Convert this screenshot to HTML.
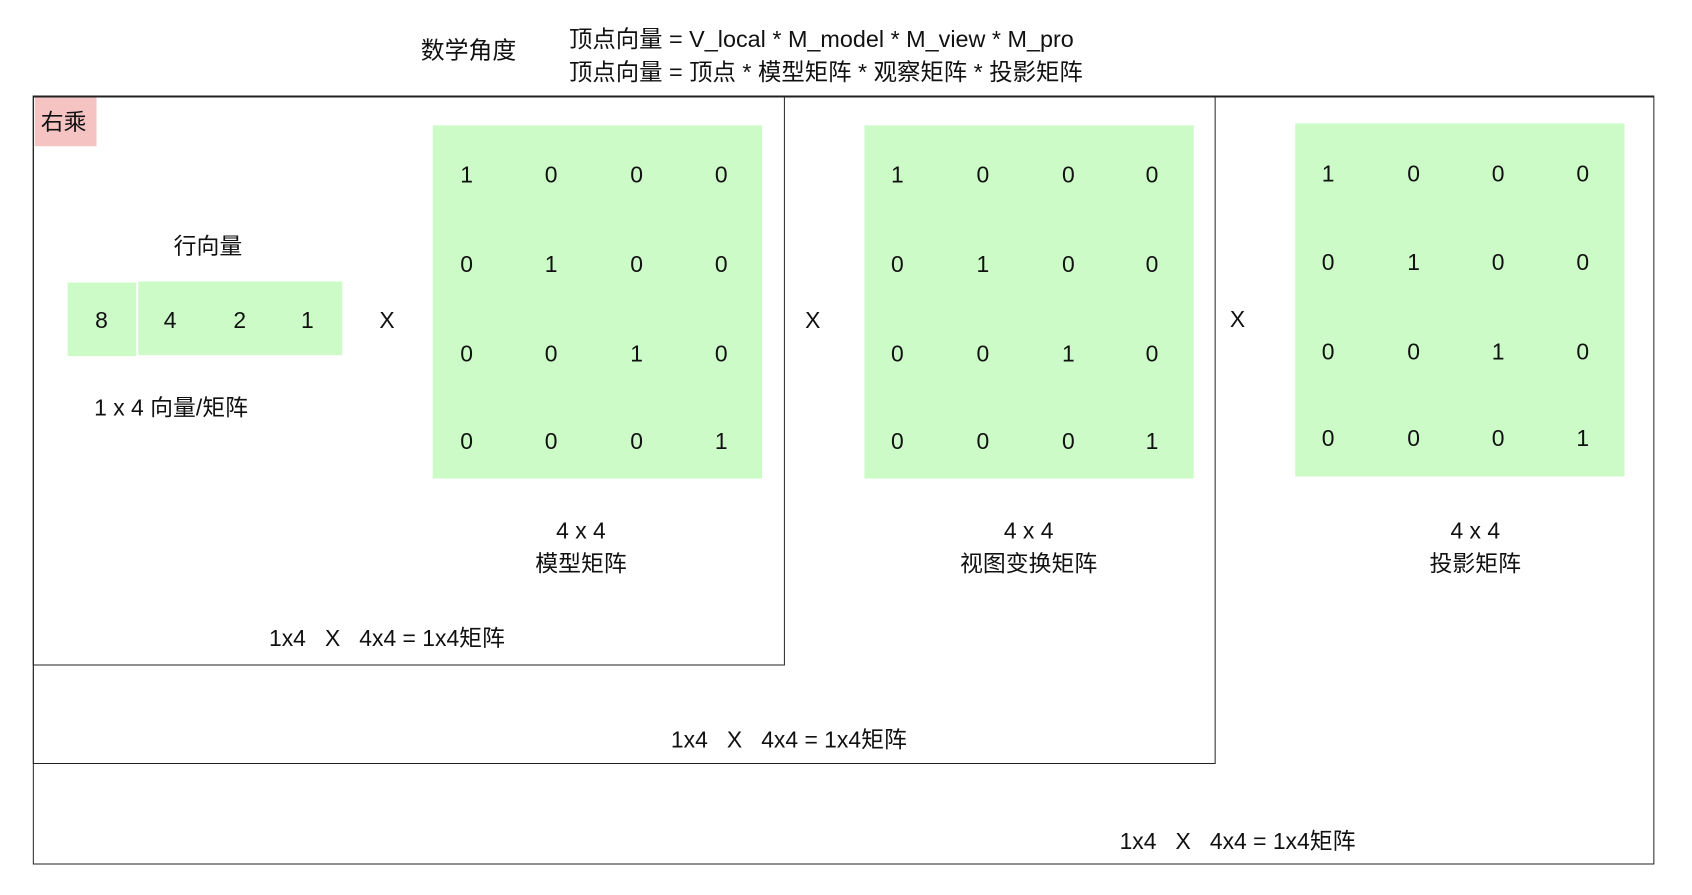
<!DOCTYPE html>
<html><head><meta charset="utf-8"><style>
html,body{margin:0;padding:0;background:#fff;}
body{width:1692px;height:890px;position:relative;overflow:hidden;font-family:"Liberation Sans","Noto Sans CJK SC",sans-serif;color:#111;font-size:23px;}
#w{position:absolute;left:0;top:0;width:1700px;height:900px;transform:scale(0.9948);transform-origin:0 0;}
.b{position:absolute;border:1.5px solid #222;box-sizing:border-box;}
.g{position:absolute;background:#ccfbc8;}
.t{position:absolute;white-space:nowrap;line-height:1;transform:translate(-50%,-50%);}
.l{position:absolute;white-space:nowrap;line-height:1;transform:translateY(-50%);}
</style></head><body><div id="w">
<div class="b" style="left:33px;top:96px;width:1630px;height:773px;border-top-width:2px"></div>
<div class="b" style="left:33px;top:96px;width:1189px;height:672px;border-top-width:2px"></div>
<div class="b" style="left:33px;top:96px;width:756px;height:573px;border-top-width:2px"></div>
<div style="position:absolute;left:35px;top:98px;width:62px;height:49px;background:#f6c3c3"></div>
<div class="l" style="left:41px;top:123px;font-size:23px">右乘</div>

<div class="l" style="left:423px;top:52px;font-size:24px">数学角度</div>
<div class="l" style="left:572px;top:40px;font-size:23.5px">顶点向量 = V_local * M_model * M_view * M_pro</div>
<div class="l" style="left:572px;top:73px;font-size:23.5px">顶点向量 = 顶点 * 模型矩阵 * 观察矩阵 * 投影矩阵</div>

<div class="t" style="left:209px;top:248px">行向量</div>
<div class="g" style="left:68px;top:284px;width:69px;height:74px"></div>
<div class="g" style="left:139px;top:283px;width:205px;height:74px"></div>
<div class="t" style="left:102px;top:322px">8</div>
<div class="t" style="left:171px;top:322px">4</div>
<div class="t" style="left:241px;top:322px">2</div>
<div class="t" style="left:309px;top:322px">1</div>
<div class="t" style="left:389px;top:322px">X</div>
<div class="t" style="left:172px;top:410px">1 x 4 向量/矩阵</div>

<div class="g" style="left:435px;top:126px;width:331px;height:355px"></div>
<div class="g" style="left:869px;top:126px;width:331px;height:355px"></div>
<div class="g" style="left:1302px;top:124px;width:331px;height:355px"></div>
<div class="t" style="left:817px;top:322px">X</div>
<div class="t" style="left:1244px;top:321px">X</div>

<div id="m"></div>

<div class="t" style="left:584px;top:534px">4 x 4</div>
<div class="t" style="left:584px;top:567px">模型矩阵</div>
<div class="t" style="left:1034px;top:534px">4 x 4</div>
<div class="t" style="left:1034px;top:567px">视图变换矩阵</div>
<div class="t" style="left:1483px;top:534px">4 x 4</div>
<div class="t" style="left:1483px;top:567px">投影矩阵</div>

<div class="t" style="left:389px;top:642px">1x4&nbsp;&nbsp; X&nbsp;&nbsp; 4x4 = 1x4矩阵</div>
<div class="t" style="left:793px;top:744px">1x4&nbsp;&nbsp; X&nbsp;&nbsp; 4x4 = 1x4矩阵</div>
<div class="t" style="left:1244px;top:846px">1x4&nbsp;&nbsp; X&nbsp;&nbsp; 4x4 = 1x4矩阵</div>
</div>
<script>
(function(){
var mats=[[[469,554,640,725],[176,266,356,444]],[[902,988,1074,1158],[176,266,356,444]],[[1335,1421,1506,1591],[175,264,354,441]]];
var h='';
mats.forEach(function(m){for(var r=0;r<4;r++)for(var c=0;c<4;c++){h+='<div class="t" style="left:'+m[0][c]+'px;top:'+m[1][r]+'px">'+(r==c?1:0)+'</div>';}});
document.getElementById('m').innerHTML=h;
})();
</script>
</body></html>
